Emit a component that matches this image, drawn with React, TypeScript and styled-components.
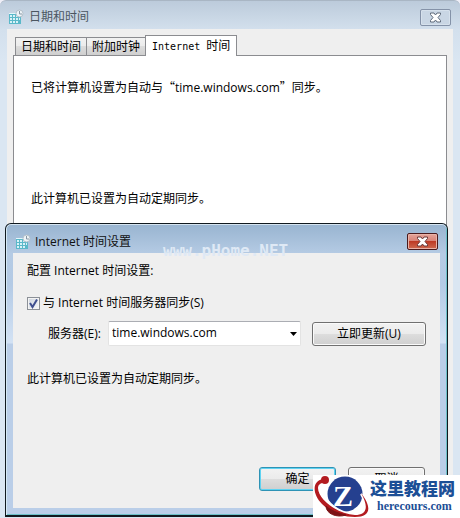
import React from "react";
import styled, { createGlobalStyle, css } from "styled-components";

const Global = createGlobalStyle`
  *, *::before, *::after { box-sizing: border-box; }
  body {
    margin: 0;
    background: #efeff8;
    color: #000;
    font: 12px/18px "Open Sans", "Noto Sans CJK SC", sans-serif;
  }
  button, input, select { font: inherit; color: inherit; margin: 0; }
  p, h1, h2 { margin: 0; font: inherit; }
`;

const Desktop = styled.div`
  position: relative;
  min-height: 100vh;
  display: flex;
  overflow: hidden;
`;

const BackWindow = styled.main`
  flex: 1;
  display: flex;
  flex-direction: column;
  padding: 0 7px 2px;
  background: linear-gradient(#bccbdb, #d3e0ed 29px, #dae6f2 60px);
  border-top: 1px solid #a9b6c4;
  border-radius: 6px 6px 0 0;
`;

const TitleBar = styled.header<{ $front?: boolean }>`
  display: flex;
  align-items: center;
  height: ${(p) => (p.$front ? 29 : 28)}px;
  padding-left: ${(p) => (p.$front ? 2 : 1)}px;
  gap: ${(p) => (p.$front ? 4 : 5)}px;
  color: ${(p) => (p.$front ? "#111" : "#4b5661")};
  padding-top: ${(p) => (p.$front ? 6 : 4)}px;
`;

const Title = styled.h1`
  flex: 1;
`;

const CloseButton = styled.button<{ $front?: boolean }>`
  display: grid;
  place-items: center;
  width: 31px;
  height: 17px;
  margin-right: 2px;
  padding: 0;
  border-radius: 2px;
  ${(p) =>
    p.$front
      ? css`
          border: 1px solid #4a1a1c;
          background: linear-gradient(#e5a59b, #d88478 45%, #bd3a25 50%, #cf6a50);
          box-shadow: inset 0 0 0 1px #e9b3a8;
        `
      : css`
          border: 1px solid #8492a8;
          background: #c9d6e4;
          box-shadow: inset 0 0 0 1px #d6e1ec;
        `}
`;

const BackBody = styled.div`
  flex: 1;
  display: flex;
  flex-direction: column;
  padding: 6px 6px 0;
  background: #efefef;
`;

const Tabs = styled.div`
  display: flex;
  align-items: flex-end;
  padding-left: 2px;
`;

const Tab = styled.button<{ $active?: boolean }>`
  height: 18px;
  padding: 0 5px;
  border: 1px solid #8b8c90;
  border-bottom: 0;
  margin-right: -1px;
  line-height: 18px;
  white-space: nowrap;
  background: linear-gradient(#f2f2f2, #ebebeb 50%, #dcdcdc 50%, #cfcfcf);
  ${(p) =>
    p.$active &&
    css`
      height: 21px;
      padding: 0 6px;
      margin-bottom: -1px;
      z-index: 1;
      background: #fff;
    `}
`;

const Mono = styled.span`
  font: 10px "DejaVu Sans Mono", monospace;
  margin-right: 6px;
`;

const TabPanel = styled.section`
  flex: 1;
  padding: 22px 17px;
  border: 1px solid #8b8c90;
  background: #fff;
`;

const Quote = styled.span`
  font-family: "Noto Sans CJK SC", sans-serif;
`;

const SyncStatus = styled.p`
  margin-top: 93px;
`;

const Dialog = styled.section`
  position: absolute;
  top: 223px;
  left: 5px;
  right: 12px;
  padding: 0 7px 7px;
  border: 1px solid #10191f;
  border-width: 1px 1px 2px;
  border-radius: 6px 6px 0 0;
  background: linear-gradient(#98b4d0, #b5cbe4 30px, #b3cae5 60px, #d3e2f4 119px, #bacee8 120px);
  box-shadow: inset 0 1px #d5e4f0, inset 1px 0 #d5e9f5, inset -1px -1px #6cc0c8;
`;

const DialogBody = styled.form`
  display: flex;
  flex-direction: column;
  padding: 9px 14px 17px;
  background: #efefef;
`;

const CheckRow = styled.label`
  display: flex;
  align-items: center;
  gap: 3px;
  margin-top: 14px;
`;

const CheckHolder = styled.span`
  display: grid;
  width: 13px;
  height: 13px;

  > * { grid-area: 1 / 1; }
  > svg { pointer-events: none; }
`;

const Checkbox = styled.input`
  appearance: none;
  width: 13px;
  height: 13px;
  border: 1px solid #8b9097;
  background: linear-gradient(135deg, #cdd4de, #f6f8fa);
  box-shadow: inset 0 0 0 1px #f4f4f4;
`;

const ServerRow = styled.div`
  display: flex;
  align-items: center;
  height: 25px;
  margin-top: 9px;
  padding-left: 21px;
`;

const ServerLabel = styled.label`
  width: 60px;
  white-space: nowrap;
`;

const SelectHolder = styled.div`
  flex: 1;
  display: grid;
  align-items: center;
  margin-right: 11px;

  > * { grid-area: 1 / 1; }
  > svg { justify-self: end; margin-right: 4px; pointer-events: none; }
`;

const Select = styled.select`
  appearance: none;
  width: 100%;
  height: 25px;
  padding: 0 20px 1px 3px;
  border: 1px solid #e3e3e3;
  border-top-color: #abadb3;
  border-radius: 2px;
  background: #fff;
`;

const PushButton = styled.button<{ $wide?: boolean; $primary?: boolean }>`
  width: ${(p) => (p.$wide ? 114 : 77)}px;
  height: 24px;
  padding: 0;
  border: 1px solid ${(p) => (p.$primary ? "#2e93b5" : "#707070")};
  border-radius: 3px;
  background: linear-gradient(#f2f2f2, #ebebeb 50%, #dddddd 50%, #cfcfcf);
  box-shadow: inset 0 0 0 1px ${(p) => (p.$primary ? "#5fd3f2" : "#fafafa")};
`;

const DialogStatus = styled.p`
  margin-top: 24px;
`;

const Actions = styled.div`
  display: flex;
  justify-content: flex-end;
  gap: 12px;
  margin-top: 79px;
  padding-right: 1px;
`;

const Watermark = styled.span`
  position: absolute;
  top: 242px;
  left: 163px;
  font: bold 16px/18px "DejaVu Sans Mono", monospace;
  color: #dfe9f5;
  pointer-events: none;
`;

const Brand = styled.a`
  position: absolute;
  right: 0;
  bottom: 0;
  display: flex;
  width: 147px;
  height: 43px;
  background: #fff;
  color: #1c4f96;
  text-decoration: none;
`;

const BrandText = styled.span`
  display: flex;
  flex-direction: column;
  padding-top: 3px;
`;

const BrandName = styled.strong`
  font: 900 17px/20px "Noto Sans CJK SC", sans-serif;
`;

const BrandSite = styled.strong`
  padding-left: 7px;
  font: bold 12px/16px "Liberation Serif", serif;
`;

const CalendarIcon = () => (
  <svg width="16" height="16" viewBox="0 0 16 16" aria-hidden="true">
    <path d="M1 4h12v11H1z" fill="#e4f6fa" />
    <path d="M1 5h12v10H1z" fill="#5ab8c9" />
    <path d="M2 6h2v2H2zM5 6h2v2H5zM8 6h2v2H8zM11 9h1v2h-1zM2 9h2v2H2zM5 9h2v2H5zM8 9h2v2H8zM2 12h2v2H2zM5 12h2v2H5zM8 12h2v2H8z" fill="#d8f2f7" />
    <circle cx="11.500" cy="4.500" r="3.500" fill="#eef4f8" stroke="#b3c0ca" />
    <path d="M11.500 2V5H14" fill="none" stroke="#8797a4" />
  </svg>
);

const CloseIcon = ({ stroke }: { stroke: string }) => (
  <svg width="13" height="11" viewBox="0 0 13 11" aria-hidden="true">
    <path d="M1.500 1h3.500l1.500 2L8 1h3.500v1.500L9 5.500l2.500 3V10H8L6.500 8 5 10H1.500V8.500l2.500-3-2.500-3z" fill="#fff" stroke={stroke} />
  </svg>
);

const BrandMark = () => (
  <svg width="57" height="43" viewBox="0 0 57 43" aria-hidden="true">
    <circle cx="32" cy="19" r="17.500" fill="#25408f" />
    <text x="30" y="31" textAnchor="middle" fontFamily="Liberation Serif, serif" fontWeight="bold" fontSize="30" fill="#fff">Z</text>
    <path d="M10 6C7 20 17 32 33 38C47 43 58 37 48 19C60 32 59 43 42 42C20 40 -2 23 3 10Z" fill="#fff" stroke="#fff" strokeWidth="2" />
    <path d="M10 4C-1 6 -1 19 9 29C17 37 30 42 42 42C58 42 59 32 48 18C56 32 54 40 42 40C24 39 5 24 5 13C5 10 7 8 11 8Z" fill="#b31b20" />
    <circle cx="12" cy="5" r="4" fill="#b31b20" />
    <path d="M13 31C18 36 25 38 33 40C24 43 13 39 13 31Z" fill="#7d1216" stroke="#7d1216" />
  </svg>
);

export default function App() {
  return (
    <>
      <Global />
      <Desktop>
        <BackWindow>
          <TitleBar>
            <CalendarIcon />
            <Title>日期和时间</Title>
            <CloseButton type="button" aria-label="关闭">
              <CloseIcon stroke="#5f6b7b" />
            </CloseButton>
          </TitleBar>
          <BackBody>
            <Tabs role="tablist">
              <Tab role="tab">日期和时间</Tab>
              <Tab role="tab">附加时钟</Tab>
              <Tab role="tab" aria-selected="true" $active>
                <Mono>Internet</Mono>时间
              </Tab>
            </Tabs>
            <TabPanel role="tabpanel">
              <p>
                已将计算机设置为自动与<Quote>“</Quote>time.windows.com<Quote>”</Quote>同步。
              </p>
              <SyncStatus>此计算机已设置为自动定期同步。</SyncStatus>
            </TabPanel>
          </BackBody>
        </BackWindow>
        <Dialog role="dialog" aria-labelledby="dialog-title">
          <TitleBar $front>
            <CalendarIcon />
            <Title id="dialog-title">Internet 时间设置</Title>
            <CloseButton type="button" aria-label="关闭" $front>
              <CloseIcon stroke="#6b3a3a" />
            </CloseButton>
          </TitleBar>
          <DialogBody onSubmit={(e) => e.preventDefault()}>
            <p>配置 Internet 时间设置:</p>
            <CheckRow>
              <CheckHolder>
                <Checkbox type="checkbox" defaultChecked />
                <svg width="13" height="13" viewBox="0 0 13 13" aria-hidden="true">
                  <path d="M3 6l2.500 4L10 2.500" fill="none" stroke="#3f4f8f" strokeWidth="2" />
                </svg>
              </CheckHolder>
              与 Internet 时间服务器同步(S)
            </CheckRow>
            <ServerRow>
              <ServerLabel htmlFor="server">服务器(E):</ServerLabel>
              <SelectHolder>
                <Select id="server">
                  <option>time.windows.com</option>
                </Select>
                <svg width="7" height="4" viewBox="0 0 7 4" aria-hidden="true">
                  <path d="M0 0h7L3.500 4z" />
                </svg>
              </SelectHolder>
              <PushButton type="button" $wide>立即更新(U)</PushButton>
            </ServerRow>
            <DialogStatus>此计算机已设置为自动定期同步。</DialogStatus>
            <Actions>
              <PushButton type="submit" $primary>确定</PushButton>
              <PushButton type="button">取消</PushButton>
            </Actions>
          </DialogBody>
        </Dialog>
        <Watermark>www.pHome.NET</Watermark>
        <Brand href="#herecours">
          <BrandMark />
          <BrandText>
            <BrandName>这里教程网</BrandName>
            <BrandSite>herecours.com</BrandSite>
          </BrandText>
        </Brand>
      </Desktop>
    </>
  );
}
